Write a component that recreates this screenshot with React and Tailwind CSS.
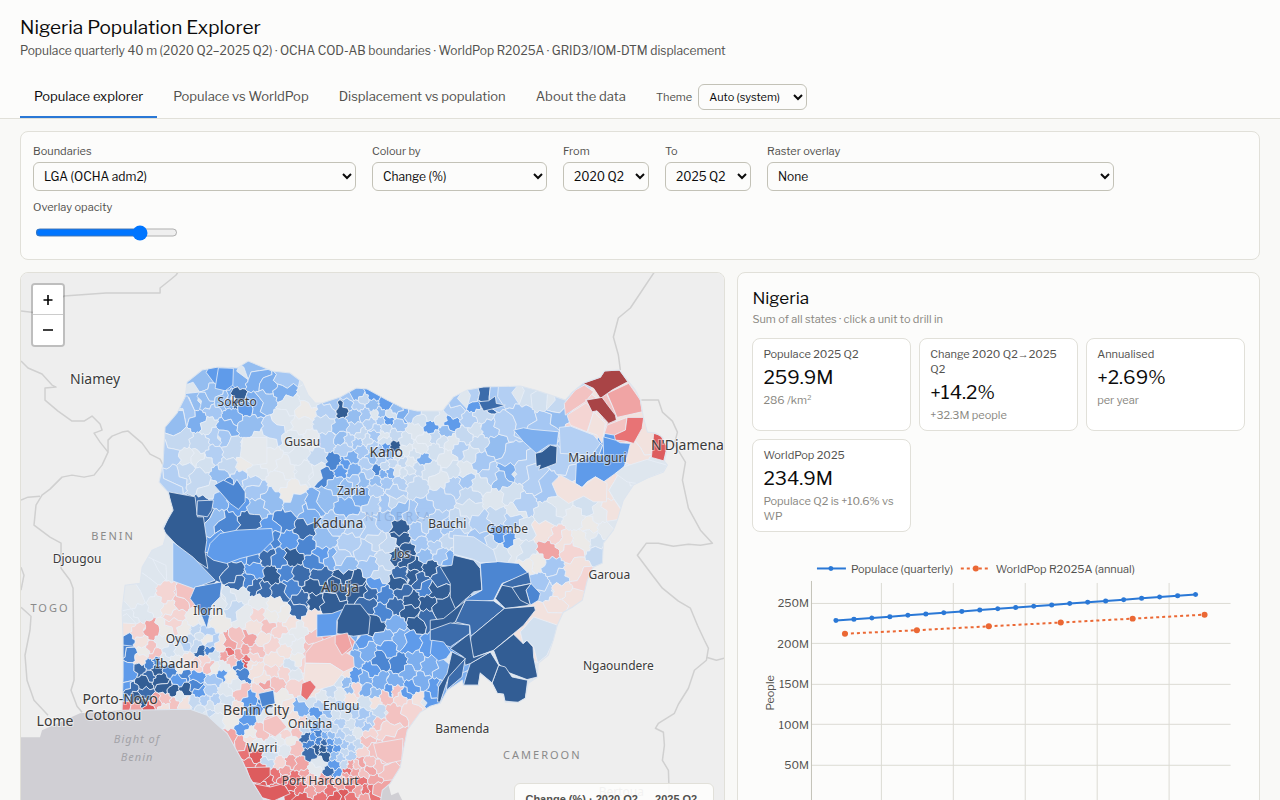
import React, { useMemo, useState } from "react";

const TABS = ["Populace explorer", "Populace vs WorldPop", "Displacement vs population", "About the data"];

const RAMP = {
  a: "#325d94", b: "#3c6cab", c: "#4c86d2", d: "#5f9bea", e: "#7caeee",
  f: "#94bdf0", g: "#a5c7f3", h: "#b3cff3", i: "#c4d8f0", j: "#d2e0ef",
  k: "#dee6ee", l: "#e5e9ed", m: "#eceae8", n: "#f2e2de", o: "#f4d5d3",
  p: "#f3c2c1", q: "#f0a4a4", r: "#e87375", s: "#dd5c5e", t: "#a94446",
};

// LGA centres on the map plane, each with its colour class
const SEEDS = `
203,380f 224,378d 240,374e 250,370f 258,380e 268,385e 285,379g 283,391e 192,402f 185,412g 172,423f 207,402f 212,411g 200,420e 212,394f 222,402f 230,402e 236,402a 245,407d 255,405e 265,400f 232,415e 225,427e 222,436g 250,425f 208,424j 216,436h 232,450i 213,455h 200,445i 197,457k 180,440i 172,457h 187,458k 185,470i 205,462j 253,450l 245,465m 255,470k 228,467i 240,478g 220,475f 200,478i 212,490j 175,475h 165,482h 262,440k 273,430h
290,405k 305,410m 300,425l 285,420k 310,440l 295,440k 268,460l 285,470l 290,490m 300,455k 280,480l 305,470k 317,458i 317,470k 270,500f 255,490g 258,508f 310,397k
328,410h 325,425i 332,404g 347,405f 343,408a 357,395e 350,395g 363,400i 373,395d 385,405d 380,413f 395,410f 402,415e 355,415f 365,414g 372,423h 340,428f 355,430h 376,415k 388,420d 398,425g 328,440h 340,437f 350,440h 360,435i 375,435g 385,428i 372,447h 362,450g 345,450h 385,440j 395,435i 405,440j 415,430k 420,420j 412,414g 440,420k 431,427d 450,423d 445,432f 430,415j 455,411h 460,402g 470,400h 475,405d 485,403b 497,397g 510,395h 525,393j 545,398j 557,405i
395,447a 385,448d 390,455f 380,460h 372,458f 367,465h 377,470c 383,474e 390,472e 385,466i 405,450k 415,455j 402,462i 410,470j 420,448k 422,460e 435,450j 430,470j 440,478k 408,477i 400,482h 362,480f 353,470e 345,463d 340,470d 335,463c 350,458e 327,476c 335,483f 347,488f 363,495e 375,490h 345,508e 325,500f 315,505e 385,482g 395,492h 375,503h 385,503g 393,500i 308,512e 297,505f 285,522c 250,520b 270,528d 303,530b
357,442g 367,441i 379,450g 398,457j 393,463i 397,470k 403,473j 411,462k 417,467i 377,481f 369,472h 355,481g 358,405h 391,414j 380,421g 372,405f 383,436k 376,428h
450,442k 465,435i 475,430j 470,420h 480,415i 488,430g 495,445f 510,460g 505,425h 518,417g 545,425g 557,415f 520,470h 508,470e 535,480h 547,487g 480,442i 470,455j 465,470k 460,450h 480,462g 500,480f 490,475h 480,485j 495,500k 510,495j 520,505h 440,500h 415,485i 455,485h 470,495i 425,510g 437,520h 410,515g 470,510j 460,522i 480,522h 498,515i 515,510k 465,480g 452,470j 447,458k 442,440j 435,437i 425,440k
577,440g 590,447f 567,462h 573,475h 620,412n 580,425o 597,432n 605,440d 617,425p 645,440n 637,457n 640,470k 622,487k 655,470k 570,490n 590,488n 605,487n 585,505j 560,505k 550,515j 575,517l 590,527m 600,515l 610,513n
512,520h 522,530j 500,535d 508,541d 490,545i 480,540g 500,552j 515,548k 525,552j 545,532n 555,537o 549,549q 570,550o 562,542n 590,535l 583,540m 600,552i 597,540j 535,563m 528,566m 575,570n 582,580o 552,568g 557,578g 545,590h 540,583g 555,605n 570,600n 545,615n 560,590n 605,530l
205,508b 230,487c 238,503d 250,482h 215,518f 225,522c 225,545d 243,553d 218,500e
213,568b 235,573b 247,580c 255,570d 262,545d 270,537c 255,557c 265,557b 305,545c 290,540d 325,540f 330,558e 292,557a 272,575a 280,560c 262,590b 285,573c 290,587c 280,592b 300,575b 303,600b 297,610b 240,582b 255,587b 320,575b 313,588a 314,600a 330,602a 345,575a 355,580a 335,588a 360,590a 322,555d 315,563c 350,545h 365,550h 375,540i 370,530h 335,522g 355,525h 385,520g 400,512f 340,557h 345,566f 370,567g 385,560i 380,575i 376,585d 400,538a 395,555a 408,550a 400,528a 390,545i 403,575b 398,583a 367,605b 385,595c 370,592b 383,612c 376,625a 395,605b 411,600a 420,580b 426,588c 415,565a 425,555f 435,547h 447,540i 420,545g 460,552i 470,560i 430,568a 440,575b 434,590a 428,603a 440,607a 417,620a 427,618b 410,612a 402,592b 407,560a 412,575a 440,555g 450,560e 455,535h 447,528g 435,535g 418,530g 425,525h
357,640e 367,652e 361,640d 395,625e 385,637e 387,647d 380,660c 370,670d 400,638e 410,643d 415,660e 400,665c 395,682e 407,672e 430,648d 445,645d 430,665e 441,668e 420,682e 435,690d 412,687d 428,700d 365,677e 355,675d 345,682f 380,682e 365,690e 350,690f 340,680j 355,660e 445,690e 390,690d 375,695f 405,695d
310,650p 325,640q 343,643q 345,660p 320,660o 335,667o 310,677n 330,677n 345,672n 312,692n 305,665o 309,687r 315,640p
240,595k 230,600j 235,607i 260,602l 275,605m 285,615m 245,615l 270,617m 297,630l 312,620n 255,627n 258,615o 268,625p 280,630o 290,623n 297,647l 285,650n 272,645o 275,660n 262,640n 297,660m 287,640l
230,645q 225,655q 229,651r 238,642p 245,650q 255,650p 239,655q 247,659r 246,663s 250,640q 240,665c 243,672c 230,677m 223,667l 235,685k 255,670n 265,678n 272,672o 267,684q 275,682p 262,692o 285,672o 291,666j 295,675k 297,684o 280,700m 240,692p 250,700d 265,702c 257,709d 247,720d 243,728d 236,710n 230,720m 218,718k 210,705j 232,660p 252,657o 221,647n 250,664n
155,570k 168,565k 135,600l 145,592k 140,612k 157,603l 165,597o 180,602p 187,597p 195,620m 175,615o 170,607n 128,625n 137,632o 152,632q 130,618k 165,630m 142,642n 145,650m 150,648p 155,655p 162,640l 174,625o 127,640c 130,655c 125,648c 217,600k 207,620l 215,620m 195,630i 190,640i 200,635j 201,650b 209,650c 207,640m 185,630m 180,650k 170,652j 205,660o 210,665p 140,660n 130,670d 140,668b 150,665c 157,660c 150,675b 145,682a 160,680a 155,670a 165,687a 173,690a 130,690b 135,697a 125,685d 180,680d 185,675c 195,685c 200,692d 195,677d 185,689a 145,695b 143,703a 123,700d 147,707s 128,708r 137,706q 157,702q 165,699p 175,703p 185,702n 180,697k 195,702i 205,700h 215,700h 210,715i 200,711j 165,708n 225,690k 210,690h 215,680g 215,668m 222,674d 165,660k 170,668c 175,660l 187,660n 195,665o 182,667m 197,645i 205,632h 210,643h 214,655j 185,643h 225,700j 220,708k
230,738q 240,743q 247,750r 255,755s 248,765r 255,775t 262,787s 275,790r 287,793s 250,740n 260,731p 250,733m 275,727p 270,720p 265,715k 275,745k 285,750k 270,755j 268,762i 280,740l 290,740m 285,735o 297,731p 302,722o 301,710e 310,700j 285,708n 295,748p 290,762q 285,770q 295,777r 300,787r 310,792q 290,785s 280,763o 300,765q 275,775r 268,778s 283,779r 305,775q 247,785s 262,770r 255,745l 293,717n 290,725l
317,712d 310,722i 320,705h 330,702j 318,733c 310,743c 316,748a 325,755a 307,737b 330,742d 340,735h 345,745g 350,738i 325,735e 320,763k 315,770l 329,772b 335,765d 335,755f 350,755h 357,745i 323,742b 313,737d 319,741c 323,748a 311,752b 330,748c 336,748d 340,757h 345,765i 330,735f 338,741f 326,728h 315,727d 304,729i 345,752i 333,728i 351,747h 338,773d 345,715j 355,712h 340,707g 365,702j 372,720h 380,712i 362,715g 350,725j 357,732k 340,722h 350,697n 355,690o 340,694k 330,692i 322,697k 328,713f 335,715j 325,720i 366,727g 360,723h 348,732i
385,697p 395,690p 402,697o 392,712p 375,700n 377,722p 368,733o 385,730o 412,705o 419,700n 366,740p 393,742p 385,757p 375,750p 362,752o 345,775q 350,765q 355,772q 360,780r 352,780q 370,770q 380,767p 340,785q 350,787r 365,790r 375,780q 330,790r 385,772p 320,787q 310,778p 357,765p 363,773p 344,793s 358,790q 372,790r 378,787q 335,797s 350,797r 365,797q 320,797r 305,798s 347,771r 341,778p 325,779q 361,762q 368,762p
`.trim().split(/\s+/).map((s) => {
  const [x, y] = s.slice(0, -1).split(",").map(Number);
  return { x, y, c: s.slice(-1) };
});

const COUNTRY = "187,382 202,370 218,367 237,368 248,361 272,371 290,373 302,382 308,395 315,403 322,403 340,397 356,388 367,389 387,400 403,408 417,411 442,411 453,397 467,390 483,387 520,386 535,390 565,400 572,392 583,383 600,377 604,371 619,370 627,380 635,390 640,400 643,417 647,432 655,433 662,437 667,447 664,461 667,465 663,472 647,478 633,485 623,500 617,520 613,530 603,543 602,563 593,567 587,580 582,600 572,607 563,612 557,625 553,640 548,655 538,663 537,677 528,683 525,698 518,702 505,702 503,694 497,693 492,683 480,673 478,685 463,685 462,680 447,690 440,703 430,706 420,712 407,730 403,750 400,767 390,783 382,790 378,815 275,815 263,799 250,778 243,762 227,733 220,727 207,715 190,709 122,710 123,677 123,638 122,610 125,585 140,583 142,567 152,550 163,545 166,535 163,527 173,510 168,492 159,482 163,463 165,427 177,413 185,397";

// Large units whose outline matters, in thirds of a map unit from an origin
const UNITS = [
  { at: [430, 530], shapes: [
    ["a", "70,75 130,90 150,115 155,180 130,185 75,235 60,200 60,160 30,110 65,105"],
    ["c", "150,100 190,93 265,100 295,130 215,160 190,210 120,218 105,208 155,180"],
    ["b", "218,160 295,125 302,160 250,170 225,235 195,205"],
    ["a", "240,170 262,175 285,215 300,225 225,235 195,205 215,165"],
    ["c", "302,160 287,180 300,225 325,210 330,190"],
    ["a", "245,172 302,160 287,180 300,225 270,210"],
    ["b", "75,275 105,210 190,212 222,235 122,318 118,285"],
    ["a", "0,270 40,265 105,212 75,275 40,295 0,300"],
    ["a", "122,318 222,235 312,228 315,240 280,285 250,310 190,360 130,382 118,350"],
    ["a", "250,312 278,340 290,330 308,350 310,380 322,440 290,448 230,425 205,400 190,360"],
    ["a", "205,405 225,410 245,440 292,450 285,505 265,517 222,512 220,492 200,490 185,460"],
    ["a", "120,400 180,365 205,405 185,458 150,430 145,465 100,465 110,430"],
    ["a", "60,355 118,310 130,382 180,365 120,400 105,405 100,380"],
    ["b", "0,300 60,278 118,285 118,310 60,350 0,330"],
    ["d", "5,330 40,335 62,365 48,385 25,392 0,370"],
    ["b", "105,385 95,440 48,480 55,435"],
    ["a", "65,365 105,385 55,440 30,515 22,515 25,470 50,430"],
    ["j", "270,305 310,260 382,285 370,330 350,375 322,398 310,350 290,330 278,340"],
    ["i", "70,15 130,20 190,60 200,95 150,98 130,88 70,72"],
  ] },
  { at: [460, 340], shapes: [
    ["p", "312,190 345,150 372,135 400,155 375,185 315,225"],
    ["o", "320,225 378,188 400,215 380,275 330,255"],
    ["n", "382,275 400,215 435,250 425,310 410,285"],
    ["p", "440,255 500,232 495,270 462,285 432,280"],
    ["p", "375,180 420,175 455,150 440,165 455,195 470,232 465,240"],
    ["q", "440,160 505,130 540,180 545,215 470,232 455,195"],
    ["t", "368,130 420,112 433,92 478,90 502,125 455,150 420,175 400,145"],
    ["t", "378,180 425,172 442,195 465,225 468,240 445,250 410,212 395,215"],
    ["r", "500,232 550,232 545,265 520,310 495,303 465,300 462,285 495,270"],
    ["s", "580,280 600,285 620,320 610,362 573,352"],
    ["h", "297,262 330,258 400,285 420,310 395,345 300,340"],
    ["d", "348,370 395,345 430,345 428,290 465,300 480,308 510,310 500,350 490,385 465,400 430,425 405,410 380,425 365,442 345,430"],
    ["k", "465,400 490,380 560,358 620,375 610,395 560,415 540,432 500,425"],
    ["n", "275,430 300,405 345,430 365,442 405,410 440,430 438,485 400,485 370,468 325,490 290,465"],
    ["e", "160,270 190,263 215,268 295,275 290,315 265,315 228,340 190,305"],
    ["a", "225,340 245,335 270,315 290,320 288,370 235,390 240,375 228,380"],
    ["b", "55,185 85,182 105,168 108,190 135,195 110,203 70,213"],
  ] },
  { at: [20, 270], shapes: [
    ["a", "445,665 525,680 532,740 550,740 560,810 555,845 563,895 510,860 470,825 428,780 455,720"],
    ["b", "532,692 580,690 575,720 562,740 530,735"],
    ["c", "582,645 610,630 640,645 650,628 675,665 675,695 655,718 630,700"],
    ["f", "458,815 520,862 585,930 520,955 458,932"],
    ["c", "510,985 525,950 605,935 600,980 575,1005 560,1075 540,1025"],
    ["d", "595,293 640,295 638,345 615,362 585,355"],
    ["l", "668,502 740,502 740,580 700,585 660,560"],
  ] },
  { at: [220, 530], shapes: [
    ["d", "0,10 50,0 155,-5 160,30 120,70 60,85 20,100 0,95 -20,90 -40,75 -30,40"],
    ["d", "290,252 335,250 375,235 350,270 350,315 290,320"],
    ["a", "375,222 420,222 450,260 445,312 400,318 350,310 352,270"],
    ["p", "255,370 280,340 345,315 365,360 400,380 402,410 370,425 330,400 255,398"],
    ["n", "255,400 330,400 370,425 340,465 290,480 250,450"],
    ["q", "345,315 382,308 395,350 365,375 345,340"],
    ["r", "245,460 270,450 288,470 260,510 242,495"],
    ["c", "115,490 160,480 165,520 125,530"],
    ["p", "130,570 170,555 200,590 165,620 130,600"],
    ["p", "460,640 548,625 545,690 500,700 470,680"],
    ["s", "100,760 150,770 190,760 210,790 160,812 120,800"],
    ["s", "78,712 150,710 150,735 120,760 92,755"],
  ] },
];

const BORDERS = [
  "M21,311 L38,313 64,296 106,293 160,293 160,288 170,280 176,275 178,272",
  "M21,361 L28,368 42,374 52,385 56,387 45,388 45,400 58,411 72,421 84,421 92,416 100,424 102,430 94,433 100,442 108,452 108,440 112,436 122,432 128,431 142,443 150,454 160,459 164,467",
  "M108,452 L102,465 94,475 84,477 72,475 62,477 50,489 42,495 36,505 34,525 50,537 61,543 61,568 70,580 73,588 74,680 71,690 77,706 82,712",
  "M21,500 L28,497 40,496",
  "M21,567 L24,575 21,590 M21,607 L31,616 30,630 25,655 27,680 34,700 48,715",
  "M654,272 L640,293 630,308 618,318 613,337 618,355 620,370",
  "M641,400 L658,400 662,412 672,421 677,432 674,444 685,462 682,480 688,508 700,530 712,543 700,545 688,544 673,546 658,543 646,543 637,555 652,575 662,588 678,601 690,608 697,625 704,640 708,648 706,660 694,670 688,688 678,704 674,713 658,723 655,728 663,732 664,745 662,760 668,770 669,800",
  "M706,657 L716,660 724,658",
];

const SEA = "21,737 40,737 42,730 60,722 80,713 122,710 190,709 207,715 220,727 227,733 243,762 250,778 263,799 275,860 21,860";

const CITIES = [
  ["Niamey", 95, 384, 16], ["Sokoto", 237, 406, 14], ["Gusau", 302, 446, 14], ["Kano", 386, 457, 16],
  ["Maiduguri", 597, 462, 14], ["N'Djamena", 687, 450, 16], ["Zaria", 351, 495, 14], ["Kaduna", 338, 528, 16],
  ["Bauchi", 447, 528, 14], ["Gombe", 507, 533, 14], ["Jos", 402, 558, 14], ["Abuja", 340, 592, 16],
  ["Djougou", 77, 563, 14], ["Garoua", 609, 579, 14], ["Ilorin", 208, 615, 14], ["Oyo", 177, 643, 14],
  ["Ibadan", 177, 668, 15], ["Ngaoundere", 618, 670, 14], ["Porto-Novo", 120, 704, 16], ["Cotonou", 113, 720, 16],
  ["Lome", 55, 726, 16], ["Benin City", 256, 715, 16], ["Enugu", 341, 710, 14], ["Onitsha", 310, 728, 14],
  ["Warri", 262, 752, 14], ["Bamenda", 462, 733, 14], ["Port Harcourt", 320, 785, 14], ["Bertoua", 621, 796, 14],
];

const COUNTRIES = [
  ["BENIN", 113, 540], ["TOGO", 50, 612], ["CAMEROON", 542, 759],
];

// keep the part of a polygon that is nearer to a than to b
function cut(poly, a, b) {
  const mx = (a.x + b.x) / 2;
  const my = (a.y + b.y) / 2;
  const side = (p) => (p[0] - mx) * (b.x - a.x) + (p[1] - my) * (b.y - a.y);
  const out = [];
  poly.forEach((p, i) => {
    const q = poly[(i + 1) % poly.length];
    const sp = side(p);
    const sq = side(q);
    if (sp <= 0) out.push(p);
    if (sp * sq < 0) {
      const t = sp / (sp - sq);
      out.push([p[0] + (q[0] - p[0]) * t, p[1] + (q[1] - p[1]) * t]);
    }
  });
  return out;
}

// bend an edge the same way whichever of its two cells draws it
function roughen(poly) {
  const out = [];
  poly.forEach((p, i) => {
    const q = poly[(i + 1) % poly.length];
    out.push(p);
    const flip = p[0] > q[0];
    const [s, e] = flip ? [q, p] : [p, q];
    const dx = e[0] - s[0];
    const dy = e[1] - s[1];
    if (Math.hypot(dx, dy) < 4) return;
    const mids = [0.25, 0.5, 0.75].map((t, k) => {
      const w = Math.sin(Math.round(s[0] + e[0]) * 12.9 + Math.round(s[1] + e[1]) * 7.2 + k * 2) * 0.16;
      return [s[0] + dx * t - dy * w, s[1] + dy * t + dx * w];
    });
    out.push(...(flip ? mids.reverse() : mids));
  });
  return out;
}

const toPoints = (poly) => poly.map((p) => `${p[0].toFixed(1)},${p[1].toFixed(1)}`).join(" ");

function buildCells() {
  return SEEDS.map((a) => {
    const near = SEEDS.filter((b) => b !== a && Math.hypot(a.x - b.x, a.y - b.y) < 80);
    let poly = [[a.x - 40, a.y - 40], [a.x + 40, a.y - 40], [a.x + 40, a.y + 40], [a.x - 40, a.y + 40]];
    near.forEach((b) => {
      poly = cut(poly, a, b);
    });
    return { fill: RAMP[a.c], points: toPoints(roughen(poly)) };
  });
}

function place(points, [ox, oy]) {
  const poly = points.split(" ").map((p) => {
    const [x, y] = p.split(",").map(Number);
    return [ox + x / 3, oy + y / 3];
  });
  return toPoints(poly);
}

function NigeriaMap() {
  const cells = useMemo(buildCells, []);
  return (
    <svg
      viewBox="21 273 703 584"
      preserveAspectRatio="xMinYMin slice"
      className="block h-full w-full bg-[#eeeeee]"
      role="img"
      aria-label="Map of population change by LGA"
    >
      <defs>
        <clipPath id="country">
          <polygon points={COUNTRY} />
        </clipPath>
      </defs>
      <polygon points={SEA} fill="#d0cfd4" />
      <path d="M372,800 L380,788 388,784 391,795 398,792 402,800 410,815 370,815 Z" fill="#d0cfd4" />
      <g fill="none" stroke="#d0d0d0" strokeWidth="1.5" strokeLinejoin="round">
        {BORDERS.map((d) => (
          <path key={d} d={d} />
        ))}
      </g>
      <g clipPath="url(#country)" stroke="#e8eff8" strokeWidth="0.8" strokeLinejoin="round">
        <polygon points={COUNTRY} fill="#dee6ee" stroke="none" />
        {cells.map((cell, i) => (
          <polygon key={i} points={cell.points} fill={cell.fill} />
        ))}
        {UNITS.map((u) =>
          u.shapes.map(([c, pts]) => <polygon key={pts} points={place(pts, u.at)} fill={RAMP[c]} />)
        )}
      </g>
      <polygon points={COUNTRY} fill="none" stroke="#dde5ef" strokeWidth="1" />
      <g className="font-['Noto_Sans',sans-serif]" textAnchor="middle">
        <text x="399" y="521" fontSize="12" fill="#6f8fbd" opacity="0.35" className="tracking-[3px]">NIGERIA</text>
        {COUNTRIES.map(([name, x, y]) => (
          <text key={name} x={x} y={y} fontSize="11" fill="#8a8a8a" className="tracking-[2px]">{name}</text>
        ))}
        <g fontSize="11" fill="#a3a3a8" fontStyle="italic" className="tracking-[1px]">
          <text x="137" y="743">Bight of</text>
          <text x="137" y="761">Benin</text>
        </g>
        <g fill="#3b3b3b" stroke="#ffffff" strokeWidth="2" strokeOpacity="0.45" paintOrder="stroke">
          {CITIES.map(([name, x, y, size]) => (
            <text key={name} x={x} y={y} fontSize={size - 2}>{name}</text>
          ))}
        </g>
      </g>
    </svg>
  );
}

function MapPanel() {
  return (
    <section className="relative h-[586px] overflow-hidden rounded-lg border border-[#e1e0d9]">
      <NigeriaMap />
      <div className="absolute left-2.5 top-2.5 flex flex-col overflow-hidden rounded border-2 border-black/20 bg-clip-padding">
        <button aria-label="Zoom in" className="flex h-[30px] w-[30px] items-center justify-center border-b border-[#ccc] bg-white">
          <svg viewBox="0 0 10 10" className="size-2.5" stroke="#000" strokeWidth="1.6"><path d="M5 0v10M0.5 5h9" /></svg>
        </button>
        <button aria-label="Zoom out" className="flex h-[30px] w-[30px] items-center justify-center bg-white">
          <svg viewBox="0 0 10 10" className="size-2.5" stroke="#000" strokeWidth="1.6"><path d="M0 5h10" /></svg>
        </button>
      </div>
      <div className="absolute bottom-2.5 right-2.5 w-[200px] rounded-md border border-[#e1e0d9] bg-[#fcfcfb]/95 px-2.5 py-2 text-[11px] leading-[14px] text-[#52514e]">
        <div className="mb-1 whitespace-nowrap font-['Liberation_Sans',sans-serif] font-bold">Change (%) · 2020 Q2 → 2025 Q2</div>
        <div className="h-2.5 rounded-sm bg-linear-to-r from-[#a94446] via-[#eceae8] to-[#325d94]" />
        <div className="mt-1 flex justify-between"><span>−50%</span><span>0</span><span>+50%</span></div>
      </div>
    </section>
  );
}

function Field({ id, label, width, options }) {
  return (
    <div className="flex flex-col gap-1">
      <label htmlFor={id} className="text-[11px] leading-[14px] text-[#52514e]">{label}</label>
      <select id={id} className={`h-[29px] rounded-md border border-[#c3c2b7] bg-[#fcfcfb] px-1.5 text-[12px] text-[#0b0b0b] ${width}`}>
        {options.map((o) => (
          <option key={o}>{o}</option>
        ))}
      </select>
    </div>
  );
}

function Controls() {
  const [opacity, setOpacity] = useState(76);
  return (
    <section className="flex flex-wrap gap-x-4 gap-y-[9px] rounded-lg border border-[#e1e0d9] bg-[#fcfcfb] p-3">
      <Field id="boundaries" label="Boundaries" width="w-[323px]" options={["LGA (OCHA adm2)", "State (OCHA adm1)"]} />
      <Field id="colour" label="Colour by" width="w-[175px]" options={["Change (%)", "Population"]} />
      <Field id="from" label="From" width="w-[86px]" options={["2020 Q2"]} />
      <Field id="to" label="To" width="w-[86px]" options={["2025 Q2"]} />
      <Field id="raster" label="Raster overlay" width="w-[347px]" options={["None"]} />
      <div className="flex flex-col gap-1">
        <label htmlFor="opacity" className="text-[11px] leading-[14px] text-[#52514e]">Overlay opacity</label>
        <input
          id="opacity"
          type="range"
          value={opacity}
          onChange={(e) => setOpacity(Number(e.target.value))}
          className="mx-0.5 h-[29px] w-[143px]"
        />
      </div>
    </section>
  );
}

const STATS = [
  { label: "Populace 2025 Q2", value: "259.9M", note: "286 /km²" },
  { label: "Change 2020 Q2→2025 Q2", value: "+14.2%", note: "+32.3M people" },
  { label: "Annualised", value: "+2.69%", note: "per year" },
  { label: "WorldPop 2025", value: "234.9M", note: "Populace Q2 is +10.6% vs WP" },
];

function Stat({ label, value, note }) {
  return (
    <div className="rounded-lg border border-[#e1e0d9] bg-white px-2.5 py-2 text-[11px] leading-[15px]">
      <div className="text-[#52514e]">{label}</div>
      <div className="pb-0.5 pt-[3px] text-[19px] leading-[26px] text-[#0b0b0b]">{value}</div>
      <div className="-mb-px text-[#898781]">{note}</div>
    </div>
  );
}

const YEARS = [2021, 2022, 2023, 2024, 2025];
const QUARTERLY = Array.from({ length: 21 }, (_, i) => [2020.375 + i / 4, 227.6 + i * 1.615]);
const ANNUAL = [211.3, 215.7, 220.5, 225.2, 230, 234.9].map((v, i) => [2020.5 + i, v]);

// plot coordinates
const px = (year) => 129 + (year - 2021) * 72;
const py = (m) => 265 - m * 0.81;

function Chart() {
  const line = (rows) => rows.map(([x, v]) => `${px(x)},${py(v)}`).join(" ");
  return (
    <svg viewBox="0 0 493 300" className="mt-2 block w-full text-[11px]" role="img" aria-label="Population over time">
      <g stroke="#dcdbd4">
        {[50, 100, 150, 200, 250].map((m) => (
          <path key={m} d={`M59 ${Math.round(py(m))}.5H479`} />
        ))}
        {YEARS.map((y) => (
          <path key={y} d={`M${px(y)}.5 43V265`} />
        ))}
      </g>
      <path d="M59.5 41V265H479" fill="none" stroke="#c3c2b7" />
      <g fill="#52514e" textAnchor="end">
        {[0, 50, 100, 150, 200, 250].map((m) => (
          <text key={m} x="57" y={py(m) + 5}>{m ? `${m}M` : "0"}</text>
        ))}
      </g>
      <g fill="#52514e" textAnchor="middle">
        {YEARS.map((y) => (
          <text key={y} x={px(y)} y="283">{y}</text>
        ))}
        <text transform="translate(22 153) rotate(-90)">People</text>
      </g>
      <polyline points={line(QUARTERLY)} fill="none" stroke="#2a78d6" strokeWidth="2" />
      <polyline points={line(ANNUAL)} fill="none" stroke="#eb6834" strokeWidth="2" strokeDasharray="3 3" />
      {QUARTERLY.map(([x, v]) => (
        <circle key={x} cx={px(x)} cy={py(v)} r="2.5" fill="#2a78d6" />
      ))}
      {ANNUAL.map(([x, v]) => (
        <circle key={x} cx={px(x)} cy={py(v)} r="3" fill="#eb6834" />
      ))}
      <path d="M65 28.5h29" stroke="#2a78d6" strokeWidth="2" />
      <circle cx="79" cy="28.5" r="2.5" fill="#2a78d6" />
      <path d="M209 28.5h29" stroke="#eb6834" strokeWidth="2" strokeDasharray="3 3" />
      <circle cx="224" cy="28.5" r="3" fill="#eb6834" />
      <text x="99" y="33" fill="#52514e">Populace (quarterly)</text>
      <text x="244" y="33" fill="#52514e">WorldPop R2025A (annual)</text>
    </svg>
  );
}

function SummaryPanel() {
  return (
    <section className="rounded-lg border border-[#e1e0d9] bg-[#fcfcfb] px-3.5 py-3">
      <h2 className="text-[17px] leading-[26px] text-[#0b0b0b]">Nigeria</h2>
      <p className="mb-2.5 text-[11px] leading-[17px] text-[#898781]">Sum of all states · click a unit to drill in</p>
      <div className="grid grid-cols-3 gap-2">
        {STATS.map((s) => (
          <Stat key={s.label} {...s} />
        ))}
      </div>
      <Chart />
    </section>
  );
}

export default function App() {
  const [tab, setTab] = useState(TABS[0]);
  return (
    <div className="min-h-screen bg-[#f9f9f7] font-['Libre_Franklin','Liberation_Sans',sans-serif] text-[#0b0b0b]">
      <header className="border-b border-[#e1e0d9] bg-[#fcfcfb] px-5 pt-3.5">
        <h1 className="text-[19px] leading-7">Nigeria Population Explorer</h1>
        <p className="text-[12px] leading-[18px] text-[#52514e]">
          Populace quarterly 40 m (2020 Q2–2025 Q2) · OCHA COD-AB boundaries · WorldPop R2025A · GRID3/IOM-DTM displacement
        </p>
        <nav className="mt-4 flex items-center gap-0.5">
          {TABS.map((t) => (
            <button
              key={t}
              onClick={() => setTab(t)}
              className={`h-[42px] border-b-2 px-3.5 pt-0.5 text-[13px] ${
                t === tab ? "border-[#2a78d6] text-[#0b0b0b]" : "border-transparent text-[#52514e]"
              }`}
            >
              {t}
            </button>
          ))}
          <label htmlFor="theme" className="ml-3.5 text-[11px] text-[#52514e]">Theme</label>
          <select id="theme" className="ml-1 h-[26px] w-[109px] rounded-md border border-[#c3c2b7] bg-[#fcfcfb] px-1.5 text-[11px]">
            <option>Auto (system)</option>
            <option>Light</option>
            <option>Dark</option>
          </select>
        </nav>
      </header>
      <main className="flex flex-col gap-3 px-5 py-3">
        <Controls />
        <div className="grid grid-cols-[1.35fr_1fr] items-start gap-3">
          <MapPanel />
          <SummaryPanel />
        </div>
      </main>
    </div>
  );
}
